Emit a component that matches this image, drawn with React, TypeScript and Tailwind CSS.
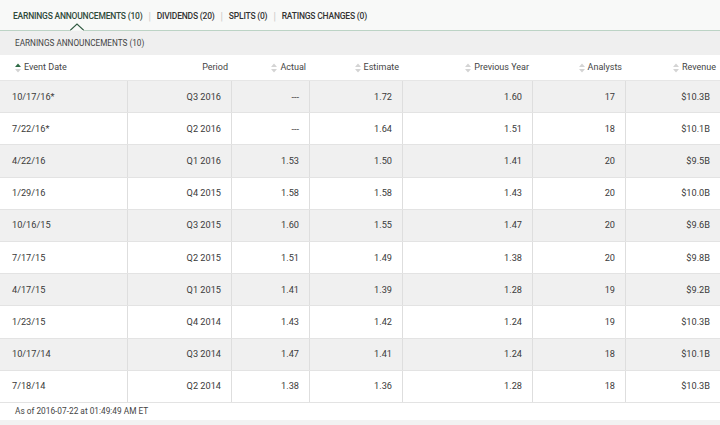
const tabs = [
  { label: 'EARNINGS ANNOUNCEMENTS (10)', active: true },
  { label: 'DIVIDENDS (20)' },
  { label: 'SPLITS (0)' },
  { label: 'RATINGS CHANGES (0)' },
];

const rows = [
  ['10/17/16*', 'Q3 2016', '---', '1.72', '1.60', '17', '$10.3B'],
  ['7/22/16*', 'Q2 2016', '---', '1.64', '1.51', '18', '$10.1B'],
  ['4/22/16', 'Q1 2016', '1.53', '1.50', '1.41', '20', '$9.5B'],
  ['1/29/16', 'Q4 2015', '1.58', '1.58', '1.43', '20', '$10.0B'],
  ['10/16/15', 'Q3 2015', '1.60', '1.55', '1.47', '20', '$9.6B'],
  ['7/17/15', 'Q2 2015', '1.51', '1.49', '1.38', '20', '$9.8B'],
  ['4/17/15', 'Q1 2015', '1.41', '1.39', '1.28', '19', '$9.2B'],
  ['1/23/15', 'Q4 2014', '1.43', '1.42', '1.24', '19', '$10.3B'],
  ['10/17/14', 'Q3 2014', '1.47', '1.41', '1.24', '18', '$10.1B'],
  ['7/18/14', 'Q2 2014', '1.38', '1.36', '1.28', '18', '$10.3B'],
];

const grid = 'grid grid-cols-[128px_104px_78px_93px_130px_93px_94px]';

const SortIcon = ({ active = false }: { active?: boolean }) => (
  <svg width="6" height="10" viewBox="0 0 6 10" className="mr-[3px] shrink-0">
    <path d="M3 0.5 L6 4 L0 4 Z" fill={active ? '#2e6b45' : '#d4d4d4'} />
    <path d="M3 9.5 L6 6 L0 6 Z" fill="#d4d4d4" />
  </svg>
);

const HeadCell = ({ label, first = false, active = false, icon = true }: { label: string; first?: boolean; active?: boolean; icon?: boolean }) => (
  <div className={`flex items-center ${first ? 'justify-start pl-[15px]' : 'justify-end pr-[4px]'}`}>
    {icon && <SortIcon active={active} />}
    <span>{label}</span>
  </div>
);

export default function App() {
  return (
    <div className="w-[720px] h-[425px] bg-[#f2f2f2] text-[#333] overflow-hidden" style={{ fontFamily: 'Roboto, "Liberation Sans", sans-serif' }}>
      {/* tabs */}
      <div className="relative h-[31px] bg-[#f8f9f8] border-b border-[#bcd3c5] flex items-center pt-[2px] pl-[13px] text-[8.5px] font-medium tracking-[-0.2px]">
        {tabs.map((t, i) => (
          <div key={t.label} className="flex items-center">
            {i > 0 && <span className="mx-[6px] text-[#c9c9c9] font-normal text-[10px]">|</span>}
            <span className={t.active ? 'text-[#2f4a3a]' : 'text-[#333]'}>{t.label}</span>
          </div>
        ))}
        <svg width="14" height="8" viewBox="0 0 14 8" className="absolute left-[70px] bottom-[-1px]">
          <path d="M0 7.5 L7 1 L14 7.5" fill="#f8f9f8" stroke="#2f5a40" strokeWidth="1.1" />
          <path d="M0.5 7.6 L13.5 7.6" stroke="#f8f9f8" strokeWidth="1" />
        </svg>
      </div>

      {/* sub header */}
      <div className="h-[24px] bg-[#efefef] flex items-center pl-[15px] text-[8.2px] text-[#444]">
        EARNINGS ANNOUNCEMENTS (10)
      </div>

      {/* column header */}
      <div className={`${grid} h-[26px] bg-white border-b border-[#e6e6e6] text-[9px] text-[#444]`}>
        <HeadCell label="Event Date" first active />
        <HeadCell label="Period" icon={false} />
        <HeadCell label="Actual" />
        <HeadCell label="Estimate" />
        <HeadCell label="Previous Year" />
        <HeadCell label="Analysts" />
        <HeadCell label="Revenue" />
      </div>

      {/* rows */}
      {rows.map((r, i) => (
        <div key={i} className={`${grid} h-[32.2px] border-b border-[#e3e3e3] text-[9.2px] text-[#3a3a3a] ${i % 2 === 0 ? 'bg-[#f0f0f0]' : 'bg-white'}`}>
          {r.map((c, j) => (
            <div
              key={j}
              className={`flex items-center ${j === 0 ? 'justify-start pl-[12px]' : 'justify-end pr-[10px]'} ${j < r.length - 1 ? 'border-r border-[#dedede]' : ''}`}
            >
              {c}
            </div>
          ))}
        </div>
      ))}

      {/* footer */}
      <div className="h-[17px] bg-white flex items-center pl-[15px] text-[8.3px] text-[#444]">
        As of 2016-07-22 at 01:49:49 AM ET
      </div>
    </div>
  );
}
